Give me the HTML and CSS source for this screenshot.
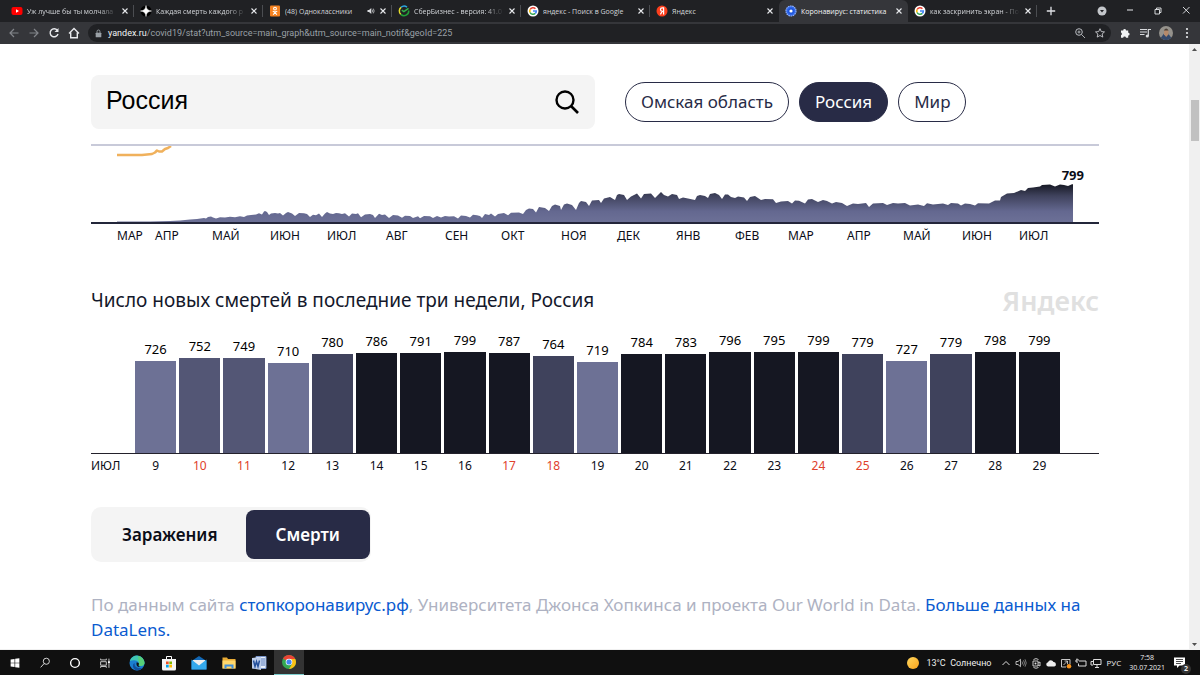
FILE: index.html
```html
<!DOCTYPE html>
<html lang="ru">
<head>
<meta charset="utf-8">
<title>Коронавирус: статистика</title>
<link rel="stylesheet" href="styles.css">
</head>
<body>
<svg class="defs" aria-hidden="true">
  <symbol id="close" viewBox="0 0 8 8"><path d="M1.5 1.5l5 5M6.5 1.5l-5 5" stroke="currentColor" stroke-width="1.1" fill="none"/></symbol>
  <symbol id="google" viewBox="0 0 12 12"><circle cx="6" cy="6" r="5.500" fill="#fff"/><g fill="none" stroke-width="1.6"><path d="M8.4 3.7A3.3 3.3 0 0 0 3.1 4.5" stroke="#ea4335"/><path d="M3.1 4.5a3.3 3.3 0 0 0 0 3" stroke="#fbbc05"/><path d="M3.1 7.5a3.3 3.3 0 0 0 5.2.9" stroke="#34a853"/><path d="M8.3 8.4A3.3 3.3 0 0 0 9.3 6H6" stroke="#4285f4"/></g></symbol>
</svg>

<header class="browser">
  <nav class="tabs">
    <div class="tab">
      <svg class="fav" viewBox="0 0 12 12"><rect x="0.5" y="2" width="11" height="8" rx="2" fill="#f00"/><path d="M5 4.2v3.6L8 6z" fill="#fff"/></svg>
      <span class="tab-name fade">Уж лучше бы ты молчала</span>
      <button class="x" aria-label="Закрыть"><svg><use href="#close"/></svg></button>
    </div>
    <div class="tab">
      <svg class="fav" viewBox="0 0 12 12"><circle cx="6" cy="6" r="5.5" fill="#000"/><path d="M6 0.5Q6.3 5.7 11.5 6 6.3 6.3 6 11.5 5.7 6.3.5 6 5.7 5.7 6 .5z" fill="#fff" stroke="#fff" stroke-width=".5"/></svg>
      <span class="tab-name fade">Каждая смерть каждого р</span>
      <button class="x" aria-label="Закрыть"><svg><use href="#close"/></svg></button>
    </div>
    <div class="tab">
      <svg class="fav" viewBox="0 0 12 12"><rect x="1" y="0.5" width="10" height="11" rx="1" fill="#f58220"/><g fill="none" stroke="#fff" stroke-width="1.1"><circle cx="6" cy="3.6" r="1.4"/><path d="M3.8 6.2q2.2 1.4 4.4 0M6 7.2L4.2 9.8M6 7.2l1.8 2.6"/></g></svg>
      <span class="tab-name">(48) Одноклассники</span>
      <svg class="sound" viewBox="0 0 8 8"><path d="M.5 3H2l2.3-2v6L2 5H.5z" fill="#d8dadd"/><path d="M5.3 2.6q1 1.4 0 2.8M6.3 1.6q1.8 2.4 0 4.8" fill="none" stroke="#d8dadd" stroke-width=".7"/></svg>
      <button class="x" aria-label="Закрыть"><svg><use href="#close"/></svg></button>
    </div>
    <div class="tab">
      <svg class="fav" viewBox="0 0 12 12"><g fill="none" stroke-width="1.5"><path d="M9 2.2A4.7 4.7 0 0 0 3 2.4" stroke="#2aa7df"/><path d="M3 2.4A4.7 4.7 0 0 0 2.8 9.4" stroke="#e5dd2c"/><path d="M2.8 9.4a4.7 4.7 0 0 0 7.9-3.9" stroke="#21a038"/><path d="M3.8 5.2l2.1 1.4 4.6-3.2" stroke="#34b44a"/></g></svg>
      <span class="tab-name fade">СберБизнес - версия: 41.0</span>
      <button class="x" aria-label="Закрыть"><svg><use href="#close"/></svg></button>
    </div>
    <div class="tab">
      <svg class="fav"><use href="#google"/></svg>
      <span class="tab-name">яндекс - Поиск в Google</span>
      <button class="x" aria-label="Закрыть"><svg><use href="#close"/></svg></button>
    </div>
    <div class="tab">
      <svg class="fav" viewBox="0 0 12 12"><circle cx="6" cy="6" r="5.5" fill="#fc3f1d"/><path d="M7.6 9.4V2.8H6.2a1.7 1.7 0 0 0 0 3.5h1.2M6.3 6.2L4.4 9.4" fill="none" stroke="#fff" stroke-width="1.2"/></svg>
      <span class="tab-name">Яндекс</span>
      <button class="x" aria-label="Закрыть"><svg><use href="#close"/></svg></button>
    </div>
    <div class="tab active">
      <svg class="fav" viewBox="0 0 12 12"><circle cx="6" cy="6" r="5" fill="#2f66e8" stroke="#8fb2ff" stroke-width="1.2" stroke-dasharray="1.6 .6"/><circle cx="6" cy="6" r="3" fill="#1d55dc"/><circle cx="6" cy="6" r="1.6" fill="#fff"/></svg>
      <span class="tab-name">Коронавирус: статистика</span>
      <button class="x" aria-label="Закрыть"><svg><use href="#close"/></svg></button>
    </div>
    <div class="tab">
      <svg class="fav"><use href="#google"/></svg>
      <span class="tab-name fade">как заскринить экран - По</span>
      <button class="x" aria-label="Закрыть"><svg><use href="#close"/></svg></button>
    </div>
    <button class="new-tab" aria-label="Новая вкладка"><svg viewBox="0 0 10 10"><path d="M5 1.5v7M1.5 5h7" stroke="#dfe1e5" stroke-width="1.1"/></svg></button>
    <div class="window">
      <button aria-label="Поиск вкладок"><svg viewBox="0 0 10 10"><circle cx="5" cy="5" r="4.5" fill="#c4c7cb"/><path d="M3 4h4L5 6.6z" fill="#202124"/></svg></button>
      <button aria-label="Свернуть"><svg viewBox="0 0 10 10"><path d="M2 4h6" stroke="#e8eaed"/></svg></button>
      <button aria-label="Окно"><svg viewBox="0 0 10 10"><path d="M2 3.5h4.500v4.500H2zM3.500 3.500V2H8v4.500H6.500" fill="none" stroke="#e8eaed" stroke-width=".9"/></svg></button>
      <button aria-label="Закрыть окно"><svg viewBox="0 0 10 10"><path d="M2 1l6.500 6.500M8.500 1L2 7.500" stroke="#e8eaed" stroke-width=".9"/></svg></button>
    </div>
  </nav>
  <div class="toolbar">
    <button aria-label="Назад"><svg viewBox="0 0 12 12"><path d="M10.500 6H2M6 2L2 6l4 4" fill="none" stroke="#82858a" stroke-width="1.200"/></svg></button>
    <button aria-label="Вперёд"><svg viewBox="0 0 12 12"><path d="M1.500 6H10M6 2l4 4-4 4" fill="none" stroke="#82858a" stroke-width="1.200"/></svg></button>
    <button aria-label="Обновить"><svg viewBox="0 0 12 12"><path d="M9.300 3.300A4 4 0 1 0 10 7" fill="none" stroke="#e8eaed" stroke-width="1.400"/><path d="M10.500 1v4h-4z" fill="#e8eaed"/></svg></button>
    <button aria-label="Домой"><svg viewBox="0 0 12 12"><path d="M1 6.500l5-5 5 5M2.700 5.500v5.300h6.600V5.500" fill="none" stroke="#e8eaed" stroke-width="1.400"/></svg></button>
    <div class="address">
      <svg class="lock" viewBox="0 0 8 8"><rect x="1.500" y="3.300" width="5" height="4" rx=".5" fill="#9aa0a6"/><path d="M2.700 3.500V2.200a1.300 1.300 0 0 1 2.600 0v1.300" fill="none" stroke="#9aa0a6" stroke-width=".8"/></svg>
      <span class="url"><b>yandex.ru</b>/covid19/stat?utm_source=main_graph&amp;utm_source=main_notif&amp;geoId=225</span>
      <button aria-label="Масштаб"><svg viewBox="0 0 12 12"><g fill="none" stroke="#b8bbc0"><circle cx="5" cy="5" r="3.300"/><path d="M7.500 7.500L11 11M3.500 5h3M5 3.500v3" stroke-width=".9"/></g></svg></button>
      <button aria-label="В закладки"><svg viewBox="0 0 12 12"><path d="M6 1.700l1.300 2.900 3.200.3-2.400 2.100.7 3.100L6 8.500l-2.800 1.600.7-3.100L1.500 4.900l3.200-.3z" fill="none" stroke="#c8cace" stroke-width=".9"/></svg></button>
    </div>
    <button aria-label="Расширения"><svg viewBox="0 0 12 12"><path d="M2 3.500h2.200a1.400 1.400 0 1 1 2.800 0h2.200v2.300a1.400 1.400 0 1 1 0 2.800v2.200H7a1.400 1.400 0 0 0-2.800 0H2V8.200a1.400 1.400 0 0 0 0-2.600z" fill="#f1f3f4"/></svg></button>
    <button aria-label="Медиа"><svg viewBox="0 0 12 12"><path d="M1 2.500h7M1 5h7M1 7.500h4.500M9.300 9V2.500H12" fill="none" stroke="#d8dadd" stroke-width="1.200"/><circle cx="8.300" cy="9" r="1.600" fill="#d8dadd"/></svg></button>
    <button aria-label="Профиль" class="profile"><svg viewBox="0 0 14 14"><circle cx="7" cy="7" r="7" fill="#95928c"/><path d="M1.800 11.700l3-4h4.500l3 4A7 7 0 0 1 1.800 11.700z" fill="#34496b"/><path d="M5 5.500a2.200 2.600 0 0 1 4.400 0v3L7.200 11 5 8.500z" fill="#b58a6b"/><path d="M4.800 4.500q2.400-4 4.800 0z" fill="#4b4038"/></svg></button>
    <button aria-label="Меню"><svg viewBox="0 0 12 12"><g fill="#e8eaed"><circle cx="6" cy="2" r="1.100"/><circle cx="6" cy="6" r="1.100"/><circle cx="6" cy="10" r="1.100"/></g></svg></button>
  </div>
</header>

<div class="viewport">
  <main class="page">
    <section class="filters">
      <label class="search">
        <input type="text" value="Россия" aria-label="Регион">
        <svg viewBox="0 0 26 26"><circle cx="11" cy="11" r="8.500" fill="none" stroke="#000" stroke-width="2.400"/><path d="M17 17l7 7" stroke="#000" stroke-width="2.600"/></svg>
      </label>
      <div class="pills">
        <button class="pill">Омская область</button>
        <button class="pill on">Россия</button>
        <button class="pill">Мир</button>
      </div>
    </section>

    <section class="history">
      <svg class="area" viewBox="91 146 1008 76" preserveAspectRatio="none">
        <defs><linearGradient id="shade" gradientUnits="userSpaceOnUse" x1="0" y1="184" x2="0" y2="223"><stop offset="0" stop-color="#151722"/><stop offset=".3" stop-color="#3f425c"/><stop offset=".7" stop-color="#646890"/><stop offset="1" stop-color="#6d7197"/></linearGradient></defs>
        <path d="M117 155H142L152 154 155 152.500 157 150.500 159 151.500 162 151.500 165 149 168 148 171 146" fill="none" stroke="#f0b15c" stroke-width="2.500" stroke-linejoin="round"/>
        <path fill="url(#shade)" d="M117 223V221.500H150L170 221 180 220.500 190 219.500 197 219 204 218 206 218.500 208 217 211 216.500 213 217.500 216 218.600 220 217.300 225 217.500 230 216.800 235 217.300 240 216.300 244 217 247 215.500 251 215 256 214.600 259 213.300 262 214.500 264 211.500 265 211 267 212 269 215 271 213.500 275 213 278 213.500 280 213 283 215.500 286 213 288 212 292 213.500 295 216 299 213 304 213.300 307 214 310 217 313 214.700 316 215.300 319 213.500 322 217 325 213.500 327 212 330 213.500 333 214 336 213 339 213.300 342 214 345 213.200 349 216.500 352 213.500 356 214 358 213.300 361 217.200 365 214.500 370 214 373 215 375 218 379 213.800 382 215 385 214.500 389 218 393 215 398 215.600 402 217.800 405 215.700 410 216 413 218 418 216.200 420 218.300 424 216 430 216.300 433 218 437 216 441 217.500 445 216 449 216.500 454 216.200 458 218.500 461 215.500 466 216 470 217.500 473 214.800 477 215.300 480 216 482 218 485 214 489 215 491 213.500 495 216.500 498 214 504 213 508 215.300 511 212.800 519 212.500 523 214 526 210 529 208.500 533 209 536 212.500 539 207 545 208 549 211 552 206 555 204.500 560 206 561 210 564 204.500 567 203.500 572 205 576 210 579 203 581 201 586 202 589 206 592 200.500 599 200 601 203 604 198.500 610 197 615 200 617 195 619 194 624 195 627 200 631 196.500 637 193.500 641 198.500 644 194 651 193.500 655 198 658 195 661 192 664 195 668 196.500 672 194 677 195 679 199 683 197.500 688 198.500 695 200 697 196 700 195 705 196 708 198 710 194 715 193 719 195 722 199 725 194.500 728 194.500 731 197 735 198 738 196.500 744 197.500 747 201 750 197 755 196 761 200 765 199 773 199.300 776 203 781 201.500 788 201 792 203.500 795 200.500 799 200.800 805 203.500 808 199.500 812 199 818 202 823 200 827 201 832 203.500 836 202 842 203 847 206 853 203.500 858 204 866 203 869 207 873 203.500 883 203 887 205 893 203 898 203.500 905 203 910 205.500 918 204.500 924 206 927 203.300 933 204.500 943 203.500 948 205 951 203 958 203.500 961 205.500 965 203.500 970 204 975 205.500 978 203.300 989 203.500 995 200.500 1000 200.500 1001 197 1007 193.500 1014 193 1021 190 1025 191 1028 188 1033 187.500 1040 186.500 1042 185 1050 184.500 1055 186.500 1060 184.500 1064 185 1068 186 1072 184.300 1073 184.300V223z"/>
      </svg>
      <span class="peak">799</span>
      <div class="months">
        <span>МАР</span><span>АПР</span><span>МАЙ</span><span>ИЮН</span><span>ИЮЛ</span><span>АВГ</span><span>СЕН</span><span>ОКТ</span><span>НОЯ</span><span>ДЕК</span><span>ЯНВ</span><span>ФЕВ</span><span>МАР</span><span>АПР</span><span>МАЙ</span><span>ИЮН</span><span>ИЮЛ</span>
      </div>
    </section>

    <section class="weeks">
      <div class="heading"><h2>Число новых смертей в последние три недели, Россия</h2><span class="logo">Яндекс</span></div>
      <div class="bars">
        <div class="bar low">726<i style="height:92px"></i></div>
        <div class="bar mid">752<i style="height:95px"></i></div>
        <div class="bar mid">749<i style="height:95px"></i></div>
        <div class="bar low">710<i style="height:90px"></i></div>
        <div class="bar high">780<i style="height:99px"></i></div>
        <div class="bar">786<i style="height:100px"></i></div>
        <div class="bar">791<i style="height:100px"></i></div>
        <div class="bar">799<i style="height:101px"></i></div>
        <div class="bar">787<i style="height:100px"></i></div>
        <div class="bar high">764<i style="height:97px"></i></div>
        <div class="bar low">719<i style="height:91px"></i></div>
        <div class="bar">784<i style="height:99px"></i></div>
        <div class="bar">783<i style="height:99px"></i></div>
        <div class="bar">796<i style="height:101px"></i></div>
        <div class="bar">795<i style="height:101px"></i></div>
        <div class="bar">799<i style="height:101px"></i></div>
        <div class="bar high">779<i style="height:99px"></i></div>
        <div class="bar low">727<i style="height:92px"></i></div>
        <div class="bar high">779<i style="height:99px"></i></div>
        <div class="bar">798<i style="height:101px"></i></div>
        <div class="bar">799<i style="height:101px"></i></div>
      </div>
      <div class="days">
        <span class="month">ИЮЛ</span><span>9</span><span class="off">10</span><span class="off">11</span><span>12</span><span>13</span><span>14</span><span>15</span><span>16</span><span class="off">17</span><span class="off">18</span><span>19</span><span>20</span><span>21</span><span>22</span><span>23</span><span class="off">24</span><span class="off">25</span><span>26</span><span>27</span><span>28</span><span>29</span>
      </div>
    </section>

    <div class="switch"><button>Заражения</button><button class="on">Смерти</button></div>

    <p class="source">По данным сайта <a href="#">стопкоронавирус.рф</a>, Университета Джонса Хопкинса и проекта Our World in Data. <a href="#">Больше данных на DataLens.</a></p>
  </main>
  <div class="scroll">
    <svg viewBox="0 0 11 11"><path d="M3 7l2.500-3L8 7z" fill="#505050"/></svg>
    <div class="thumb"></div>
    <svg viewBox="0 0 11 11"><path d="M3 4l2.500 3L8 4z" fill="#505050"/></svg>
  </div>
</div>

<footer class="taskbar">
  <button aria-label="Пуск"><svg viewBox="0 0 16 16"><path d="M3 4l4.500-.7v4.400H3zM8.200 3.200L13 2.500v5.200H8.200zM3 8.300h4.500v4.400L3 12zM8.200 8.300H13v5.200l-4.800-.7z" fill="#fff"/></svg></button>
  <button aria-label="Поиск"><svg viewBox="0 0 16 16"><circle cx="9.500" cy="6" r="3.500" fill="none" stroke="#eee"/><path d="M7 8.600L3 13" stroke="#eee"/></svg></button>
  <button aria-label="Кортана"><svg viewBox="0 0 16 16"><circle cx="8" cy="8" r="5" fill="none" stroke="#fff" stroke-width="1.600"/></svg></button>
  <button aria-label="Представление задач"><svg viewBox="0 0 16 16"><path d="M3 3v1.500h6.500V3M3 6.500h6.500v4H3zM3 13.500V12h6.500v1.500M12.500 3v10.500" fill="none" stroke="#ddd"/><path d="M11.500 6h2v2h-2z" fill="#fff"/></svg></button>
  <button aria-label="Edge" class="wide"><svg viewBox="0 0 16 16"><circle cx="8" cy="8" r="7.500" fill="#1b7fd0"/><path d="M.8 6A7.500 7.500 0 0 1 15.500 8c0 2.200-2 3.200-4 3-2 0-2.200-1-1.500-2 .8-3-5-5-9.200-3z" fill="#3fc6b4"/><path d="M9 1a7.500 7.500 0 0 1 6.500 7c0 2.200-2 3.200-4 3-1.800 0-2-1-1.500-2z" fill="#62d45c" opacity=".7"/><path d="M5.700 8c-.8 4 3.500 6 8 4.700A7.500 7.500 0 0 1 6 15C3 12 3.500 9 5.700 8z" fill="#12509c"/><path d="M7.500 7.500Q10 7 10 9q-1.500 2 1.500 3-4.500.5-4-4.500z" fill="#111"/></svg></button>
  <button aria-label="Магазин"><svg viewBox="0 0 16 16"><path d="M5.500 4V1.500h5V4" fill="none" stroke="#fff"/><path d="M1 4h14v10a1.500 1.500 0 0 1-1.500 1.500h-11A1.500 1.500 0 0 1 1 14z" fill="#f5f5f5"/><path d="M5 6.500h2.700v2.700H5z" fill="#f25022"/><path d="M8.300 6.500H11v2.700H8.300z" fill="#7fba00"/><path d="M5 9.800h2.700v2.700H5z" fill="#00a4ef"/><path d="M8.300 9.800H11v2.700H8.300z" fill="#ffb900"/></svg></button>
  <button aria-label="Почта"><svg viewBox="0 0 16 16"><path d="M.5 6L8 1l7.500 5v8.500H.5z" fill="#1267b4"/><path d="M2 5h12v6H2z" fill="#eee"/><path d="M.5 4.500L8 10.500l7.500-6v10H.5z" fill="#35a9ec"/></svg></button>
  <button aria-label="Проводник"><svg viewBox="0 0 16 16"><path d="M1.500 2.500H6l1 1.500h7.500v9.500h-13z" fill="#e9ab35"/><path d="M1.500 5.500h13v8h-13z" fill="#ffd76c"/><path d="M3.500 9.500h9v4h-2v-2h-5v2h-2z" fill="#3f8edb"/></svg></button>
  <button aria-label="Word"><svg viewBox="0 0 16 16"><path d="M5 1.500h10v12H5z" fill="#e8effa" stroke="#7894c9"/><path d="M9 4h5M9 6h5M9 8h5M9 10h5" stroke="#4c72b8"/><path d="M1 3l9-1v13l-9-1.500z" fill="#bdceeb"/><path d="M2.500 5.500L4 11.500l1.500-5 1.500 5 1.500-6" fill="none" stroke="#24509c" stroke-width="1.500"/></svg></button>
  <button aria-label="Chrome" class="running"><svg viewBox="0 0 16 16"><circle cx="8" cy="8" r="7" fill="#34a853"/><path d="M8 8L1.900 4.500A7 7 0 0 1 14.100 4.500L14 5H8z" fill="#ea4335"/><path d="M8 5h6.300A7 7 0 0 1 8 15l3-5z" fill="#fbc116"/><circle cx="8" cy="8" r="3.300" fill="#fff"/><circle cx="8" cy="8" r="2.600" fill="#4285f4"/></svg></button>
  <div class="tray">
    <span class="sun"></span>
    <span class="weather">13°C&nbsp; Солнечно</span>
    <svg viewBox="0 0 12 12"><path d="M2.500 8L6 4.500 9.500 8" fill="none" stroke="#ddd"/></svg>
    <svg viewBox="0 0 12 12"><path d="M1 4.500h2l2.500-2.200v7.400L3 7.500H1z" fill="none" stroke="#ddd" stroke-width=".8"/><path d="M7 4.500q1 1.500 0 3M8.500 3.300q2 2.700 0 5.400M10 2.300q2.500 3.700 0 7.400" fill="none" stroke="#aaa" stroke-width=".7"/></svg>
    <svg viewBox="0 0 12 12"><path d="M3 4h5v5H3zM8 6l2-1v4L8 8M3.500 2.500q2.500-1.800 5 0M3.500 10.500q2.500 1.500 5 0" fill="none" stroke="#ddd" stroke-width=".9"/><circle cx="5.500" cy="6.500" r="1" fill="#ddd"/></svg>
    <svg viewBox="0 0 12 12"><path d="M3 9.500a2.200 2.200 0 0 1 0-4.300 3 3 0 0 1 5.500-.2 2.300 2.300 0 0 1 .8 4.500z" fill="#eee"/></svg>
    <svg viewBox="0 0 12 12"><path d="M1.500 2.500h8.500V7M1.500 2.500V10H6" fill="none" stroke="#ddd" stroke-width=".9"/><path d="M3.500 8l4-4M4.500 4h3v3" fill="none" stroke="#ddd" stroke-width=".8"/><circle cx="9" cy="9.300" r="2.300" fill="#f7941d"/></svg>
    <svg viewBox="0 0 12 12"><path d="M4 4h7v5H3.500V6.500M1 3h3M2 1.500v1.500M1 3v2h2" fill="none" stroke="#ddd"/></svg>
    <svg viewBox="0 0 12 12"><path d="M3.500 2.500h7.500v5H3.500zM7 7.500V10M5 10.500h4M1 4.500h2M1 4.500V8h2" fill="none" stroke="#ddd"/></svg>
    <span class="lang">РУС</span>
    <time>7:58<br>30.07.2021</time>
    <span class="note"><svg viewBox="0 0 16 16"><path d="M2 2.500h11v8H7.500L5 13v-2.500H2z" fill="#fff"/><path d="M4 4.500h7M4 6.500h7M4 8.500h5" stroke="#222" stroke-width=".8"/></svg><b>2</b></span>
  </div>
</footer>
</body>
</html>
```
FILE: styles.css
```css
* { box-sizing: border-box; }
body {
  margin: 0;
  height: 100vh;
  display: flex;
  flex-direction: column;
  overflow: hidden;
  background: #fff;
  color: #0b0d17;
  font-family: "Noto Sans", sans-serif;
}
button {
  padding: 0;
  border: 0;
  background: none;
  color: inherit;
  font: inherit;
  display: flex;
  align-items: center;
  justify-content: center;
}
svg { display: block; flex: none; }
.defs { position: absolute; width: 0; height: 0; }

/* browser chrome */
.browser { background: #202124; color: #d2d5d9; font-family: "Open Sans", sans-serif; font-size: 7px; }
.tabs { display: flex; height: 22px; padding-left: 5px; }
.tab {
  flex: 0 1 129px;
  min-width: 0;
  display: flex;
  align-items: center;
  padding: 0 5px 0 6px;
  gap: 4px;
  background: linear-gradient(#4b4d51, #4b4d51) right 5px / 1px 12px no-repeat;
}
.tab:has(+ .active) { background: none; }
.tab.active { background: #35363a; color: #f1f3f4; border-radius: 6px 6px 0 0; }
.fav { width: 12px; height: 12px; }
.tab-name {
  flex: 1;
  overflow: hidden;
  white-space: nowrap;
}
.fade { mask-image: linear-gradient(to right, #000 80%, transparent); }
.sound { width: 8px; height: 8px; }
.x svg { width: 8px; height: 8px; color: #e8eaed; }
.new-tab { width: 28px; }
.new-tab svg { width: 12px; height: 12px; }
.window { margin-left: auto; display: flex; gap: 18px; padding-right: 9px; }
.window svg { width: 10px; height: 10px; }
.toolbar {
  height: 22px;
  display: flex;
  align-items: center;
  gap: 8px;
  padding: 0 7px 0 8px;
  background: #35363a;
}
.toolbar svg { width: 12px; height: 12px; }
.toolbar .profile svg { width: 14px; height: 14px; }
.address {
  flex: 1;
  height: 18px;
  display: flex;
  align-items: center;
  gap: 8px;
  padding: 0 5px 0 6px;
  border-radius: 9px;
  background: #202124;
  color: #9aa0a6;
  font-family: Roboto, sans-serif;
  font-size: 9px;
}
.address .lock { width: 9px; height: 9px; margin-right: -3px; }
.url { flex: 1; white-space: nowrap; }
.url b { color: #f1f3f4; font-weight: 400; }

/* page */
.viewport { flex: 1; min-height: 0; display: flex; overflow: hidden; }
.page { flex: 1; min-width: 0; padding: 0 90px 0 91px; border-bottom: 1px solid #f0f0f0; }
.filters {
  display: flex;
  align-items: center;
  gap: 30px;
  height: 102px;
  padding-top: 16px;
  border-bottom: 2px solid #c8cad9;
}
.search {
  flex: 0 1 504px;
  height: 54px;
  display: flex;
  align-items: center;
  padding: 0 15px;
  border-radius: 8px;
  background: #f4f4f4;
}
.search input {
  flex: 1;
  min-width: 0;
  height: 34px;
  padding: 0 0 4px;
  border: 0;
  outline: 0;
  background: none;
  color: #000;
  font: 25px "Liberation Sans", Arial, sans-serif;
}
.search svg { width: 26px; height: 26px; }
.pills { display: flex; gap: 10px; }
.pill {
  height: 40px;
  padding: 0 15px 2px;
  border: 1px solid #282b46;
  border-radius: 20px;
  color: #282b46;
  font-size: 17px;
  white-space: nowrap;
}
.pill.on { background: #282b46; color: #fff; }

.history { position: relative; }
.area { width: 100%; height: 78px; border-bottom: 2px solid #23263a; }
.peak { position: absolute; top: 19px; right: 15px; font-size: 13px; line-height: 20px; font-weight: 700; }
.months {
  display: grid;
  grid-template-columns: 38fr 57fr 58fr 57fr 59fr 59fr 56fr 60fr 56fr 59fr 59fr 53fr 59fr 56fr 59fr 57fr 80fr;
  padding: 2px 0 0 26px;
  font-size: 12px;
  line-height: 20px;
}
.heading {
  display: flex;
  justify-content: space-between;
  align-items: center;
  height: 40px;
  margin-top: 34px;
}
h2 { margin: 0; font-size: 19px; font-weight: 400; color: #14182b; }
.logo { color: #e0e0e0; font-size: 27px; font-weight: 600; }
.bars, .days { display: grid; column-gap: 3px; }
.bars {
  grid-template-columns: repeat(21, 1fr);
  height: 134px;
  align-items: end;
  padding: 0 39px 0 44px;
  border-bottom: 1px solid #23212b;
}
.bar { color: #000; font-size: 13px; line-height: 20px; text-align: center; }
.bar i { display: block; margin-top: 2px; background: #151722; }
.low i { background: #6d7195; }
.mid i { background: #535675; }
.high i { background: #3f425c; }
.days {
  grid-template-columns: 41px repeat(21, 1fr);
  padding: 2px 39px 0 0;
  font-size: 12px;
  line-height: 20px;
  text-align: center;
}
.days .month { text-align: left; }
.days .off { color: #e0412c; }

.switch {
  display: flex;
  width: fit-content;
  height: 55px;
  margin-top: 31px;
  padding: 3px 1px 3px 3px;
  border-radius: 10px;
  background: #f4f4f4;
  font-size: 17px;
  font-weight: 600;
}
.switch button { padding: 0 28px; border-radius: 8px; }
.switch .on { padding: 0 30px; background: #282b46; color: #fff; }
.source { margin: 30px 0 0; color: #aeb2c2; font-size: 17px; line-height: 25px; }
.source a { color: #0a5bd0; text-decoration: none; }

.scroll {
  flex: 0 0 11px;
  display: flex;
  flex-direction: column;
  align-items: center;
  background: #f0f0f0;
}
.scroll svg { width: 11px; height: 11px; }
.scroll svg:last-child { margin-top: auto; }
.thumb { width: 8px; height: 41px; margin-top: 45px; background: #c1c1c1; }

/* taskbar */
.taskbar { height: 25px; display: flex; background: #101010; color: #eee; font-family: "Open Sans", sans-serif; font-size: 8px; }
.taskbar button { width: 30px; }
.taskbar .wide { width: 34px; }
.taskbar button svg { width: 16px; height: 16px; }
.taskbar button:nth-child(-n+4) svg { width: 14px; height: 14px; }
.taskbar .running { background: #333; border-bottom: 1px solid #7fd0d0; }
.tray { margin-left: auto; display: flex; align-items: center; gap: 3px; padding-right: 12px; white-space: nowrap; }
.tray > svg { width: 12px; height: 12px; }
.sun { width: 12px; height: 12px; border-radius: 50%; background: linear-gradient(135deg, #ffd75e, #f9a21b); }
.weather { margin: 0 5px 0 4px; font-size: 9px; font-family: Roboto, sans-serif; }
.lang { margin-left: 2px; }
time { font-size: 7px; line-height: 10px; text-align: center; margin: 0 4px 0 5px; }
.note { position: relative; }
.note svg { width: 16px; height: 16px; }
.note b {
  position: absolute;
  right: -3px;
  bottom: -3px;
  width: 10px;
  height: 10px;
  border-radius: 50%;
  background: #333;
  font-size: 7px;
  line-height: 10px;
  text-align: center;
}
```
